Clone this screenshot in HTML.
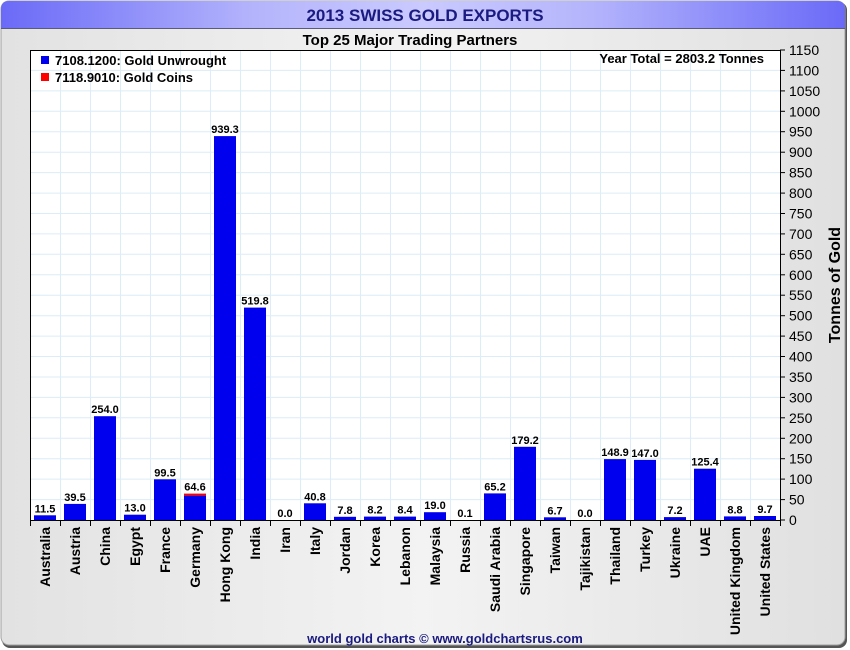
<!DOCTYPE html>
<html><head><meta charset="utf-8"><style>
html,body{margin:0;padding:0;background:#fff;}
svg{display:block;font-family:"Liberation Sans",Arial,sans-serif;}
</style></head><body>
<svg width="850" height="650" viewBox="0 0 850 650" xmlns="http://www.w3.org/2000/svg">
<defs>
<linearGradient id="tb" x1="0" x2="1" y1="0" y2="0">
<stop offset="0" stop-color="#6a6af8"/><stop offset="0.3" stop-color="#b4b4fc"/><stop offset="0.5" stop-color="#cacaff"/><stop offset="0.7" stop-color="#b4b4fc"/><stop offset="1" stop-color="#6a6af8"/>
</linearGradient>
<linearGradient id="bg" x1="0" x2="1" y1="0" y2="0">
<stop offset="0" stop-color="#e2e2e2"/><stop offset="0.5" stop-color="#f3f3f3"/><stop offset="1" stop-color="#e0e0e0"/>
</linearGradient>
</defs>
<rect x="0" y="0" width="850" height="650" fill="#fff"/>
<rect x="2" y="2" width="845" height="646" rx="8" fill="#555"/>
<rect x="1" y="1" width="844" height="644" rx="8" fill="url(#bg)" stroke="#a0a0a0" stroke-width="1"/>
<path d="M1,28 L1,9 Q1,1 9,1 L837,1 Q845,1 845,9 L845,28 Z" fill="url(#tb)"/>
<line x1="1" y1="28.5" x2="845" y2="28.5" stroke="#5a5a7a" stroke-width="1"/>
<text x="425" y="21" text-anchor="middle" font-size="17" font-weight="bold" fill="#1a1a80">2013 SWISS GOLD EXPORTS</text>
<text x="410" y="45" text-anchor="middle" font-size="15" font-weight="bold" fill="#000">Top 25 Major Trading Partners</text>
<rect x="30" y="50" width="750" height="470" fill="#fff"/>
<g stroke="#dcecf8" stroke-width="1">
<line x1="60.5" y1="50" x2="60.5" y2="520"/><line x1="90.5" y1="50" x2="90.5" y2="520"/><line x1="120.5" y1="50" x2="120.5" y2="520"/><line x1="150.5" y1="50" x2="150.5" y2="520"/><line x1="180.5" y1="50" x2="180.5" y2="520"/><line x1="210.5" y1="50" x2="210.5" y2="520"/><line x1="240.5" y1="50" x2="240.5" y2="520"/><line x1="270.5" y1="50" x2="270.5" y2="520"/><line x1="300.5" y1="50" x2="300.5" y2="520"/><line x1="330.5" y1="50" x2="330.5" y2="520"/><line x1="360.5" y1="50" x2="360.5" y2="520"/><line x1="390.5" y1="50" x2="390.5" y2="520"/><line x1="420.5" y1="50" x2="420.5" y2="520"/><line x1="450.5" y1="50" x2="450.5" y2="520"/><line x1="480.5" y1="50" x2="480.5" y2="520"/><line x1="510.5" y1="50" x2="510.5" y2="520"/><line x1="540.5" y1="50" x2="540.5" y2="520"/><line x1="570.5" y1="50" x2="570.5" y2="520"/><line x1="600.5" y1="50" x2="600.5" y2="520"/><line x1="630.5" y1="50" x2="630.5" y2="520"/><line x1="660.5" y1="50" x2="660.5" y2="520"/><line x1="690.5" y1="50" x2="690.5" y2="520"/><line x1="720.5" y1="50" x2="720.5" y2="520"/><line x1="750.5" y1="50" x2="750.5" y2="520"/>
<line x1="30" y1="499.6" x2="780" y2="499.6"/><line x1="30" y1="479.1" x2="780" y2="479.1"/><line x1="30" y1="458.7" x2="780" y2="458.7"/><line x1="30" y1="438.3" x2="780" y2="438.3"/><line x1="30" y1="417.8" x2="780" y2="417.8"/><line x1="30" y1="397.4" x2="780" y2="397.4"/><line x1="30" y1="377" x2="780" y2="377"/><line x1="30" y1="356.5" x2="780" y2="356.5"/><line x1="30" y1="336.1" x2="780" y2="336.1"/><line x1="30" y1="315.7" x2="780" y2="315.7"/><line x1="30" y1="295.2" x2="780" y2="295.2"/><line x1="30" y1="274.8" x2="780" y2="274.8"/><line x1="30" y1="254.3" x2="780" y2="254.3"/><line x1="30" y1="233.9" x2="780" y2="233.9"/><line x1="30" y1="213.5" x2="780" y2="213.5"/><line x1="30" y1="193.1" x2="780" y2="193.1"/><line x1="30" y1="172.6" x2="780" y2="172.6"/><line x1="30" y1="152.2" x2="780" y2="152.2"/><line x1="30" y1="131.7" x2="780" y2="131.7"/><line x1="30" y1="111.3" x2="780" y2="111.3"/><line x1="30" y1="90.9" x2="780" y2="90.9"/><line x1="30" y1="70.4" x2="780" y2="70.4"/>
</g>
<g fill="#0000ee">
<rect x="34" y="515.3" width="22" height="4.7"/><rect x="64" y="503.9" width="22" height="16.1"/><rect x="94" y="416.2" width="22" height="103.8"/><rect x="124" y="514.7" width="22" height="5.3"/><rect x="154" y="479.3" width="22" height="40.7"/><rect x="184" y="495.6" width="22" height="24.4"/><rect x="214" y="136.1" width="22" height="383.9"/><rect x="244" y="307.6" width="22" height="212.4"/><rect x="304" y="503.3" width="22" height="16.7"/><rect x="334" y="516.8" width="22" height="3.2"/><rect x="364" y="516.6" width="22" height="3.4"/><rect x="394" y="516.6" width="22" height="3.4"/><rect x="424" y="512.2" width="22" height="7.8"/><rect x="484" y="493.4" width="22" height="26.6"/><rect x="514" y="446.8" width="22" height="73.2"/><rect x="544" y="517.3" width="22" height="2.7"/><rect x="604" y="459.1" width="22" height="60.9"/><rect x="634" y="459.9" width="22" height="60.1"/><rect x="664" y="517.1" width="22" height="2.9"/><rect x="694" y="468.7" width="22" height="51.3"/><rect x="724" y="516.4" width="22" height="3.6"/><rect x="754" y="516" width="22" height="4"/>
</g>
<rect x="184" y="493.6" width="22" height="2" fill="#ff0000"/>
<g font-size="11" font-weight="bold" fill="#000" text-anchor="middle">
<text x="45" y="512.3">11.5</text><text x="75" y="500.9">39.5</text><text x="105" y="413.2">254.0</text><text x="135" y="511.7">13.0</text><text x="165" y="476.3">99.5</text><text x="195" y="490.6">64.6</text><text x="225" y="133.1">939.3</text><text x="255" y="304.6">519.8</text><text x="285" y="517">0.0</text><text x="315" y="500.3">40.8</text><text x="345" y="513.8">7.8</text><text x="375" y="513.6">8.2</text><text x="405" y="513.6">8.4</text><text x="435" y="509.2">19.0</text><text x="465" y="517">0.1</text><text x="495" y="490.4">65.2</text><text x="525" y="443.8">179.2</text><text x="555" y="514.3">6.7</text><text x="585" y="517">0.0</text><text x="615" y="456.1">148.9</text><text x="645" y="456.9">147.0</text><text x="675" y="514.1">7.2</text><text x="705" y="465.7">125.4</text><text x="735" y="513.4">8.8</text><text x="765" y="513">9.7</text>
</g>
<rect x="30.5" y="50.5" width="750" height="470" fill="none" stroke="#000" stroke-width="1"/>
<g stroke="#000" stroke-width="1">
<line x1="30.5" y1="520" x2="30.5" y2="526"/><line x1="60.5" y1="520" x2="60.5" y2="526"/><line x1="90.5" y1="520" x2="90.5" y2="526"/><line x1="120.5" y1="520" x2="120.5" y2="526"/><line x1="150.5" y1="520" x2="150.5" y2="526"/><line x1="180.5" y1="520" x2="180.5" y2="526"/><line x1="210.5" y1="520" x2="210.5" y2="526"/><line x1="240.5" y1="520" x2="240.5" y2="526"/><line x1="270.5" y1="520" x2="270.5" y2="526"/><line x1="300.5" y1="520" x2="300.5" y2="526"/><line x1="330.5" y1="520" x2="330.5" y2="526"/><line x1="360.5" y1="520" x2="360.5" y2="526"/><line x1="390.5" y1="520" x2="390.5" y2="526"/><line x1="420.5" y1="520" x2="420.5" y2="526"/><line x1="450.5" y1="520" x2="450.5" y2="526"/><line x1="480.5" y1="520" x2="480.5" y2="526"/><line x1="510.5" y1="520" x2="510.5" y2="526"/><line x1="540.5" y1="520" x2="540.5" y2="526"/><line x1="570.5" y1="520" x2="570.5" y2="526"/><line x1="600.5" y1="520" x2="600.5" y2="526"/><line x1="630.5" y1="520" x2="630.5" y2="526"/><line x1="660.5" y1="520" x2="660.5" y2="526"/><line x1="690.5" y1="520" x2="690.5" y2="526"/><line x1="720.5" y1="520" x2="720.5" y2="526"/><line x1="750.5" y1="520" x2="750.5" y2="526"/><line x1="780.5" y1="520" x2="780.5" y2="526"/>
<line x1="780" y1="520" x2="785" y2="520"/><line x1="780" y1="499.6" x2="785" y2="499.6"/><line x1="780" y1="479.1" x2="785" y2="479.1"/><line x1="780" y1="458.7" x2="785" y2="458.7"/><line x1="780" y1="438.3" x2="785" y2="438.3"/><line x1="780" y1="417.8" x2="785" y2="417.8"/><line x1="780" y1="397.4" x2="785" y2="397.4"/><line x1="780" y1="377" x2="785" y2="377"/><line x1="780" y1="356.5" x2="785" y2="356.5"/><line x1="780" y1="336.1" x2="785" y2="336.1"/><line x1="780" y1="315.7" x2="785" y2="315.7"/><line x1="780" y1="295.2" x2="785" y2="295.2"/><line x1="780" y1="274.8" x2="785" y2="274.8"/><line x1="780" y1="254.3" x2="785" y2="254.3"/><line x1="780" y1="233.9" x2="785" y2="233.9"/><line x1="780" y1="213.5" x2="785" y2="213.5"/><line x1="780" y1="193.1" x2="785" y2="193.1"/><line x1="780" y1="172.6" x2="785" y2="172.6"/><line x1="780" y1="152.2" x2="785" y2="152.2"/><line x1="780" y1="131.7" x2="785" y2="131.7"/><line x1="780" y1="111.3" x2="785" y2="111.3"/><line x1="780" y1="90.9" x2="785" y2="90.9"/><line x1="780" y1="70.4" x2="785" y2="70.4"/><line x1="780" y1="50" x2="785" y2="50"/>
</g>
<g font-size="14" fill="#000">
<text x="789" y="525">0</text><text x="789" y="504.6">50</text><text x="789" y="484.1">100</text><text x="789" y="463.7">150</text><text x="789" y="443.3">200</text><text x="789" y="422.8">250</text><text x="789" y="402.4">300</text><text x="789" y="382">350</text><text x="789" y="361.5">400</text><text x="789" y="341.1">450</text><text x="789" y="320.7">500</text><text x="789" y="300.2">550</text><text x="789" y="279.8">600</text><text x="789" y="259.3">650</text><text x="789" y="238.9">700</text><text x="789" y="218.5">750</text><text x="789" y="198.1">800</text><text x="789" y="177.6">850</text><text x="789" y="157.2">900</text><text x="789" y="136.7">950</text><text x="789" y="116.3">1000</text><text x="789" y="95.9">1050</text><text x="789" y="75.4">1100</text><text x="789" y="55">1150</text>
</g>
<text transform="translate(840,285) rotate(-90)" text-anchor="middle" font-size="16" font-weight="bold" fill="#000">Tonnes of Gold</text>
<rect x="41" y="56" width="8" height="8" fill="#0000ee"/>
<rect x="41" y="73" width="8" height="8" fill="#ff0000"/>
<g font-size="13" font-weight="bold" fill="#000">
<text x="55" y="65">7108.1200: Gold Unwrought</text>
<text x="55" y="82">7118.9010: Gold Coins</text>
<text x="764" y="63" text-anchor="end">Year Total = 2803.2 Tonnes</text>
</g>
<g font-size="14" font-weight="bold" fill="#000" text-anchor="end">
<text transform="translate(50,527) rotate(-90)">Australia</text>
<text transform="translate(80,527) rotate(-90)">Austria</text>
<text transform="translate(110,527) rotate(-90)">China</text>
<text transform="translate(140,527) rotate(-90)">Egypt</text>
<text transform="translate(170,527) rotate(-90)">France</text>
<text transform="translate(200,527) rotate(-90)">Germany</text>
<text transform="translate(230,527) rotate(-90)">Hong Kong</text>
<text transform="translate(260,527) rotate(-90)">India</text>
<text transform="translate(290,527) rotate(-90)">Iran</text>
<text transform="translate(320,527) rotate(-90)">Italy</text>
<text transform="translate(350,527) rotate(-90)">Jordan</text>
<text transform="translate(380,527) rotate(-90)">Korea</text>
<text transform="translate(410,527) rotate(-90)">Lebanon</text>
<text transform="translate(440,527) rotate(-90)">Malaysia</text>
<text transform="translate(470,527) rotate(-90)">Russia</text>
<text transform="translate(500,527) rotate(-90)">Saudi Arabia</text>
<text transform="translate(530,527) rotate(-90)">Singapore</text>
<text transform="translate(560,527) rotate(-90)">Taiwan</text>
<text transform="translate(590,527) rotate(-90)">Tajikistan</text>
<text transform="translate(620,527) rotate(-90)">Thailand</text>
<text transform="translate(650,527) rotate(-90)">Turkey</text>
<text transform="translate(680,527) rotate(-90)">Ukraine</text>
<text transform="translate(710,527) rotate(-90)">UAE</text>
<text transform="translate(740,527) rotate(-90)">United Kingdom</text>
<text transform="translate(770,527) rotate(-90)">United States</text>
</g>
<text x="445" y="643" text-anchor="middle" font-size="13" font-weight="bold" fill="#1a1a80">world gold charts © www.goldchartsrus.com</text>
</svg>
</body></html>
